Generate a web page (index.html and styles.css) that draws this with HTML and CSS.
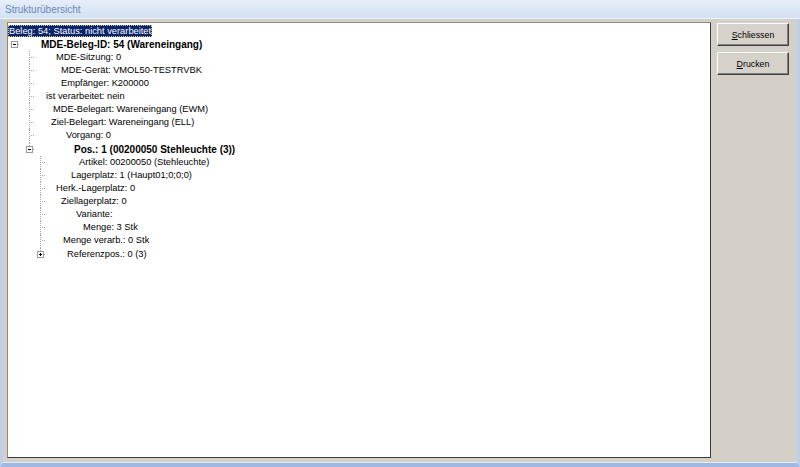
FILE: index.html
```html
<!DOCTYPE html>
<html>
<head>
<meta charset="utf-8">
<link rel="stylesheet" href="styles.css">
</head>
<body>
<div class="window">
  <div class="titlebar"><span class="title">Strukturübersicht</span></div>
  <div class="client">
    <div class="tree">
      <div class="row root"><span class="sel">Beleg: 54; Status: nicht verarbeitet</span></div>

      <div class="row l1">
        <svg class="exp" width="9" height="13" viewBox="0 0 9 13"><rect x="0.5" y="3.5" width="6" height="6" fill="#fff" stroke="#9a9a9a"/><path d="M2 6.5h3" stroke="#000"/><path d="M7 6.5h2" stroke="#a0a0a0" stroke-dasharray="1 1"/></svg>
        <span class="t b" style="--t:21px">MDE-Beleg-ID: 54 (Wareneingang)</span>
      </div>

      <div class="row l2"><span class="c"></span><span class="t" style="--t:22px">MDE-Sitzung: 0</span></div>
      <div class="row l2"><span class="c"></span><span class="t" style="--t:27px">MDE-Gerät: VMOL50-TESTRVBK</span></div>
      <div class="row l2"><span class="c"></span><span class="t" style="--t:27px">Empfänger: K200000</span></div>
      <div class="row l2"><span class="c"></span><span class="t" style="--t:12px">ist verarbeitet: nein</span></div>
      <div class="row l2"><span class="c"></span><span class="t" style="--t:19px">MDE-Belegart: Wareneingang (EWM)</span></div>
      <div class="row l2"><span class="c"></span><span class="t" style="--t:17px">Ziel-Belegart: Wareneingang (ELL)</span></div>
      <div class="row l2"><span class="c"></span><span class="t" style="--t:32px">Vorgang: 0</span></div>

      <div class="row l2x">
        <svg class="exp" width="9" height="13" viewBox="0 0 9 13"><path d="M3.5 0v3" stroke="#a0a0a0" stroke-dasharray="1 1"/><rect x="0.5" y="3.5" width="6" height="6" fill="#fff" stroke="#9a9a9a"/><path d="M2 6.5h3" stroke="#000"/><path d="M7 6.5h2" stroke="#a0a0a0" stroke-dasharray="1 1"/></svg>
        <span class="t b" style="--t:39px">Pos.: 1 (00200050 Stehleuchte (3))</span>
      </div>

      <div class="row l3"><span class="c"></span><span class="t" style="--t:34px">Artikel: 00200050 (Stehleuchte)</span></div>
      <div class="row l3"><span class="c"></span><span class="t" style="--t:26px">Lagerplatz: 1 (Haupt01;0;0;0)</span></div>
      <div class="row l3"><span class="c"></span><span class="t" style="--t:11px">Herk.-Lagerplatz: 0</span></div>
      <div class="row l3"><span class="c"></span><span class="t" style="--t:16px">Ziellagerplatz: 0</span></div>
      <div class="row l3"><span class="c"></span><span class="t" style="--t:31px">Variante:</span></div>
      <div class="row l3"><span class="c"></span><span class="t" style="--t:38px">Menge: 3 Stk</span></div>
      <div class="row l3"><span class="c"></span><span class="t" style="--t:18px">Menge verarb.: 0 Stk</span></div>

      <div class="row l3x">
        <svg class="exp" width="9" height="13" viewBox="0 0 9 13"><path d="M3.5 0v3" stroke="#a0a0a0" stroke-dasharray="1 1"/><rect x="0.5" y="3.5" width="6" height="6" fill="#fff" stroke="#9a9a9a"/><path d="M2 6.5h3M3.5 5v3" stroke="#000"/><path d="M7 6.5h2" stroke="#a0a0a0" stroke-dasharray="1 1"/></svg>
        <span class="t" style="--t:21px">Referenzpos.: 0 (3)</span>
      </div>
    </div>
    <div class="buttons">
      <button class="btn"><u>S</u>chliessen</button>
      <button class="btn"><u>D</u>rucken</button>
    </div>
  </div>
</div>
</body>
</html>
```

FILE: styles.css
```css
html, body {
  margin: 0;
  padding: 0;
}
body {
  width: 800px;
  height: 467px;
  overflow: hidden;
  font-family: "Liberation Sans", Arial, sans-serif;
  font-size: 9.3px;
}
.window {
  box-sizing: border-box;
  width: 800px;
  height: 467px;
  display: flex;
  flex-direction: column;
  background: #d4d0c8;
  border-left: 3px solid #bcd0ee;
  border-right: 3px solid #bcd0ee;
  border-bottom: 4px solid #9fb9e3;
  box-shadow: inset 0 -1px 0 #e6ebf2;
}
.titlebar {
  height: 18px;
  margin: 0 -3px;
  padding-left: 5px;
  display: flex;
  align-items: center;
  background: linear-gradient(#e6eef9, #d3e1f4);
  border-bottom: 1px solid #eef3fa;
}
.title {
  color: #6a87b6;
  font-size: 10px;
}
.client {
  flex: 1;
  display: flex;
  padding: 3px 0 5px 4px;
  gap: 6px;
  min-height: 0;
}
.tree {
  width: 704px;
  box-sizing: border-box;
  background: #fff;
  border: 1px solid;
  border-color: #8a8a8a #3c3c3c #3c3c3c #8a8a8a;
  padding: 1px 0 0 0;
  color: #000;
}
.row {
  height: 13.125px;
  display: flex;
  align-items: center;
  white-space: nowrap;
  line-height: 13px;
}
.root {
  height: 13px;
  margin-bottom: 0.5px;
}
.sel {
  background: #0a246a;
  color: #fff;
  padding: 0 1px;
  outline: 1px dotted #d8c87a;
  outline-offset: -1px;
  line-height: 12px;
}
.exp {
  display: block;
  flex: none;
}
.c {
  flex: none;
  width: 5px;
  height: 100%;
  box-sizing: border-box;
  border-left: 1px dotted #a8a8a8;
  background: repeating-linear-gradient(to right, #a8a8a8 0 1px, transparent 1px 2px) no-repeat 1px 6px / 3px 1px;
}
.t {
  margin-left: var(--t);
}
.b {
  font-weight: bold;
  font-size: 10px;
}
.l1 { padding-left: 3px; }
.l2 { padding-left: 21px; }
.l2x { padding-left: 18px; }
.l3 { padding-left: 32px; }
.l3x { padding-left: 29px; }
.buttons {
  display: flex;
  flex-direction: column;
  gap: 6px;
  padding-top: 1px;
}
.btn {
  width: 72px;
  height: 23px;
  box-sizing: border-box;
  background: #d6d2ca;
  border: 1px solid;
  border-color: #ffffff #404040 #404040 #ffffff;
  box-shadow: inset -1px -1px 0 #808080;
  font-family: "Liberation Sans", Arial, sans-serif;
  font-size: 8.8px;
  color: #000;
  padding: 0;
}
```
